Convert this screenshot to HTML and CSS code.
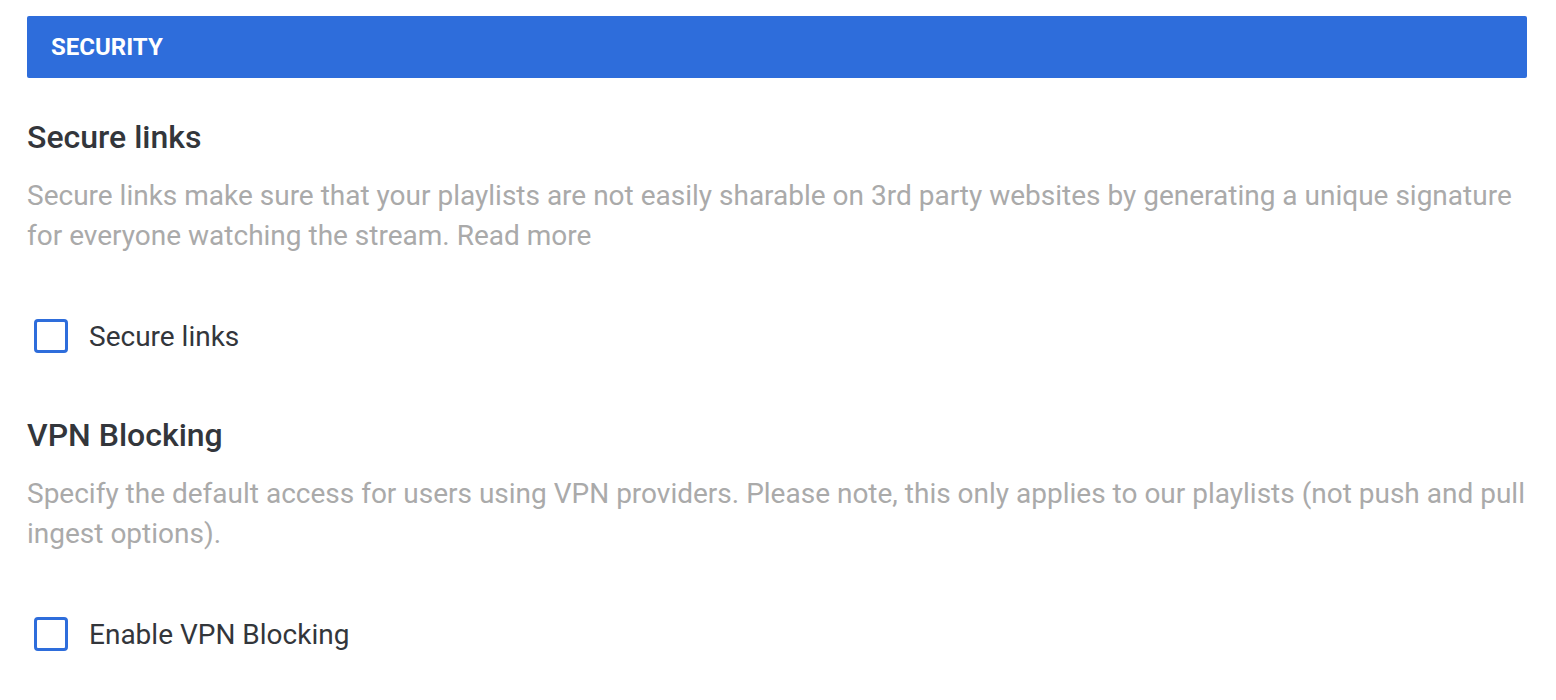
FILE: index.html
```html
<!DOCTYPE html>
<html>
<head>
<meta charset="utf-8">
<link rel="stylesheet" href="styles.css">
</head>
<body>
<div class="page">
  <div class="bar">SECURITY</div>
  <section class="section">
    <h2 class="title">Secure links</h2>
    <p class="desc">Secure links make sure that your playlists are not easily sharable on 3rd party websites by generating a unique signature for everyone watching the stream. Read more</p>
    <label class="check"><span class="box"></span><span class="label">Secure links</span></label>
  </section>
  <section class="section">
    <h2 class="title">VPN Blocking</h2>
    <p class="desc">Specify the default access for users using VPN providers. Please note, this only applies to our playlists (not push and pull ingest options).</p>
    <label class="check"><span class="box"></span><span class="label">Enable VPN Blocking</span></label>
  </section>
</div>
</body>
</html>
```
FILE: styles.css
```css
html, body { margin: 0; padding: 0; background: #fff; }
body { font-family: Roboto, "Noto Sans", sans-serif; }
.page { padding: 16px 29px 0 27px; }
.bar {
  background: #2e6ddb;
  color: #fff;
  font-weight: 700;
  font-size: 24px;
  height: 62px;
  line-height: 62px;
  padding-left: 24px;
  border-radius: 2px;
}
.section { display: flex; flex-direction: column; }
.title {
  margin: 0;
  font-size: 32px;
  font-weight: 500;
  color: #33363b;
  line-height: 40px;
}
.section:first-of-type .title { margin-top: 39px; }
.desc {
  margin: 19px 0 0;
  font-size: 28px;
  line-height: 40px;
  color: #aaaaaa;
}
.check { display: flex; align-items: center; gap: 21px; margin-top: 60px; margin-left: 7px; height: 40px; }
.box { width: 28px; height: 28px; border: 3px solid #2e6ddb; border-radius: 4px; box-sizing: content-box; }
.label { font-size: 28px; color: #33363b; }
.section + .section .title { margin-top: 59px; }
```
